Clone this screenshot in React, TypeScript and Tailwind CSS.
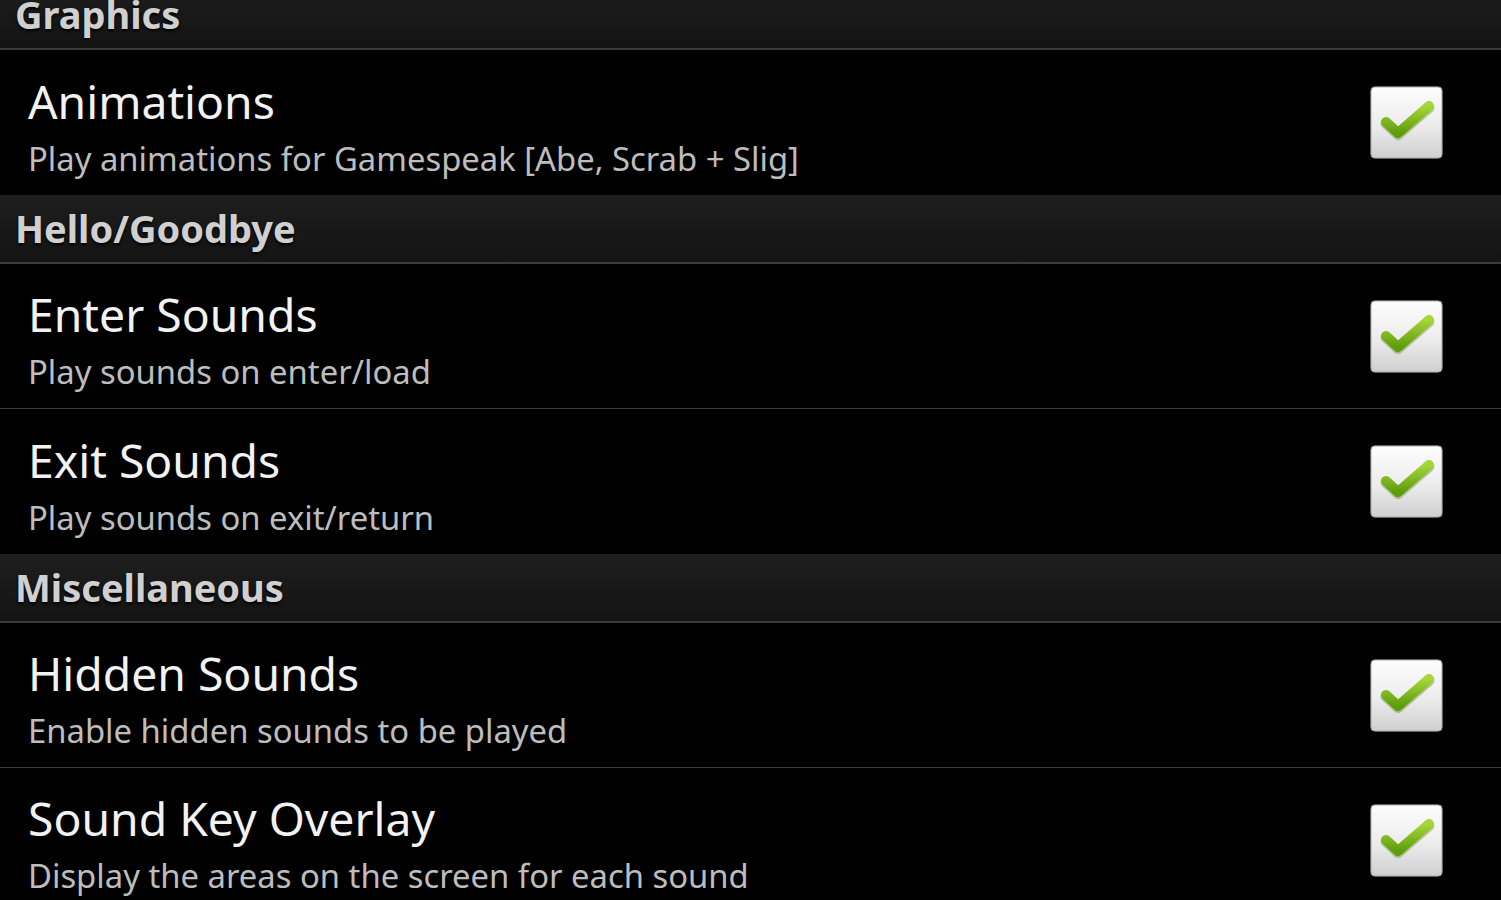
import React from "react";

type Pref = { title: string; summary: string };

const sections: { name: string; items: Pref[] }[] = [
  {
    name: "Graphics",
    items: [{ title: "Animations", summary: "Play animations for Gamespeak [Abe, Scrab + Slig]" }],
  },
  {
    name: "Hello/Goodbye",
    items: [
      { title: "Enter Sounds", summary: "Play sounds on enter/load" },
      { title: "Exit Sounds", summary: "Play sounds on exit/return" },
    ],
  },
  {
    name: "Miscellaneous",
    items: [
      { title: "Hidden Sounds", summary: "Enable hidden sounds to be played" },
      { title: "Sound Key Overlay", summary: "Display the areas on the screen for each sound" },
    ],
  },
];

function CheckBox() {
  return (
    <svg width="75" height="75" viewBox="0 0 75 75" className="shrink-0">
      <defs>
        <linearGradient id="boxg" x1="0" y1="0" x2="0" y2="1">
          <stop offset="0" stopColor="#fdfdfd" />
          <stop offset="0.55" stopColor="#ececec" />
          <stop offset="1" stopColor="#cfcfcf" />
        </linearGradient>
        <linearGradient id="chkg" x1="0" y1="0" x2="0" y2="1">
          <stop offset="0" stopColor="#a6d63a" />
          <stop offset="1" stopColor="#5e9c0c" />
        </linearGradient>
      </defs>
      <rect x="1" y="1" width="73" height="73" rx="5" fill="#3a3a3a" opacity="0.6" />
      <rect x="2" y="2" width="71" height="71" rx="4" fill="url(#boxg)" stroke="#a8a8a8" strokeWidth="1" />
      <path
        d="M17 37 L29 48 L60 21"
        fill="none"
        stroke="#4a7a0a"
        strokeWidth="11"
        strokeLinecap="round"
        strokeLinejoin="round"
        opacity="0.35"
        transform="translate(0 1.5)"
      />
      <path
        d="M17 37 L29 48 L60 21"
        fill="none"
        stroke="url(#chkg)"
        strokeWidth="10"
        strokeLinecap="round"
        strokeLinejoin="round"
      />
    </svg>
  );
}

function Header({ name, first }: { name: string; first?: boolean }) {
  return (
    <div
      className={`flex h-[69px] items-center border-b-2 border-[#3a3a3a] bg-gradient-to-b from-[#1e1e1e] to-[#141414] pl-[15px] ${first ? "-mt-[19px]" : ""}`}
    >
      <span className="text-[38px] font-bold text-[#d0d0d0] [text-shadow:0_2px_3px_#000]">{name}</span>
    </div>
  );
}

function Item({ pref, divider }: { pref: Pref; divider: boolean }) {
  return (
    <div className={`flex h-[145px] items-center justify-between bg-black pl-[28px] pr-[57px] ${divider ? "border-b border-[#3c3c3c]" : ""}`}>
      <div className="flex flex-col pt-[10px]">
        <span className="text-[46.3px] leading-[54px] text-[#f2f2f2]">{pref.title}</span>
        <span className="mt-[8px] text-[32.8px] leading-[44px] text-[#bdbdbd]">{pref.summary}</span>
      </div>
      <CheckBox />
    </div>
  );
}

export default function App() {
  return (
    <div
      className="h-[900px] w-[1501px] overflow-hidden bg-black"
      style={{ fontFamily: '"Noto Sans", "Open Sans", "DejaVu Sans", sans-serif' }}
    >
      {sections.map((s, si) => (
        <div key={s.name}>
          <Header name={s.name} first={si === 0} />
          {s.items.map((it, i) => (
            <Item key={it.title} pref={it} divider={i < s.items.length - 1 || si === sections.length - 1} />
          ))}
        </div>
      ))}
    </div>
  );
}
